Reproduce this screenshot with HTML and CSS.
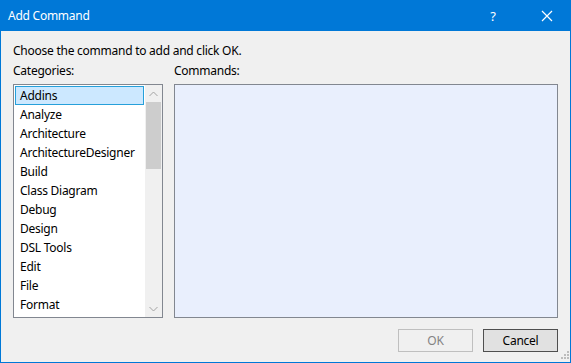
FILE: index.html
```html
<!DOCTYPE html>
<html>
<head>
<meta charset="utf-8">
<link rel="stylesheet" href="styles.css">
</head>
<body>
<div class="window">
  <div class="titlebar">
    <span class="title">Add Command</span>
    <span class="help">?</span>
    <span class="close">
      <svg width="12" height="12" viewBox="0 0 12 12"><path d="M1 1L11 11M11 1L1 11" stroke="#fff" stroke-width="1.2" fill="none"/></svg>
    </span>
  </div>
  <div class="content">
    <div class="instr">Choose the command to add and click OK.</div>
    <div class="panes">
      <div class="col left">
        <div class="label">Categories:</div>
        <div class="listbox">
          <div class="items">
            <div class="item selected">Addins</div>
            <div class="item">Analyze</div>
            <div class="item">Architecture</div>
            <div class="item">ArchitectureDesigner</div>
            <div class="item">Build</div>
            <div class="item">Class Diagram</div>
            <div class="item">Debug</div>
            <div class="item">Design</div>
            <div class="item">DSL Tools</div>
            <div class="item">Edit</div>
            <div class="item">File</div>
            <div class="item">Format</div>
          </div>
          <div class="scrollbar">
            <div class="arrow">
              <svg width="9" height="6" viewBox="0 0 9 6"><path d="M0.5 5L4.5 1L8.5 5" stroke="#a3a3a3" stroke-width="1" fill="none"/></svg>
            </div>
            <div class="thumb"></div>
            <div class="track"></div>
            <div class="arrow">
              <svg width="9" height="6" viewBox="0 0 9 6"><path d="M0.5 1L4.5 5L8.5 1" stroke="#a3a3a3" stroke-width="1" fill="none"/></svg>
            </div>
          </div>
        </div>
      </div>
      <div class="col right">
        <div class="label">Commands:</div>
        <div class="cmdbox"></div>
      </div>
    </div>
    <div class="buttons">
      <div class="btn disabled">OK</div>
      <div class="btn default">Cancel</div>
    </div>
  </div>
  <svg class="grip" width="12" height="12" viewBox="0 0 12 12">
    <g fill="#bcbcbc">
      <rect x="9" y="1" width="2" height="2"/>
      <rect x="6" y="4" width="2" height="2"/><rect x="9" y="4" width="2" height="2"/>
      <rect x="3" y="7" width="2" height="2"/><rect x="6" y="7" width="2" height="2"/><rect x="9" y="7" width="2" height="2"/>
    </g>
  </svg>
</div>
</body>
</html>
```

FILE: styles.css
```css
html, body {
  margin: 0;
  padding: 0;
  background: #f0f0f0;
}
body {
  font-family: "Noto Sans", "Open Sans", sans-serif;
  font-size: 12px;
  letter-spacing: -0.25px;
  color: #000;
}
.window {
  position: relative;
  width: 571px;
  height: 363px;
  box-sizing: border-box;
  border: 1px solid #0078d7;
  background: #f0f0f0;
  display: flex;
  flex-direction: column;
  overflow: hidden;
}
.titlebar {
  height: 30px;
  background: #0078d7;
  color: #fff;
  display: flex;
  align-items: center;
  flex-shrink: 0;
}
.title {
  margin-left: 7px;
  flex: 1;
  font-size: 12px;
  line-height: 16px;
}
.help {
  width: 14px;
  text-align: center;
  font-size: 13px;
  margin-right: 40px;
}
.close {
  width: 14px;
  display: flex;
  justify-content: center;
  margin-right: 16px;
}
.content {
  padding: 12px 12px 0 12px;
  display: flex;
  flex-direction: column;
}
.instr {
  line-height: 16px;
}
.panes {
  display: flex;
  gap: 11px;
  margin-top: 4px;
}
.col {
  display: flex;
  flex-direction: column;
}
.left { width: 150px; }
.right { flex: 1; }
.label {
  line-height: 16px;
  margin-bottom: 5px;
}
.listbox {
  height: 234px;
  box-sizing: border-box;
  border: 1px solid #828790;
  background: #fff;
  display: flex;
}
.items {
  flex: 1;
  padding: 1px;
  overflow: hidden;
}
.item {
  height: 19px;
  line-height: 18px;
  padding-top: 1px;
  padding-left: 5px;
  box-sizing: border-box;
  white-space: nowrap;
}
.item.selected {
  background: #cce8ff;
  border: 1px solid #26a0da;
  padding-top: 0;
  padding-left: 4px;
  line-height: 18px;
}
.scrollbar {
  width: 17px;
  background: #f0f0f0;
  display: flex;
  flex-direction: column;
}
.arrow {
  height: 17px;
  display: flex;
  align-items: center;
  justify-content: center;
  flex-shrink: 0;
}
.thumb {
  height: 67px;
  margin: 0 1px;
  background: #cdcdcd;
}
.track { flex: 1; }
.cmdbox {
  height: 234px;
  box-sizing: border-box;
  border: 1px solid #828790;
  background: #e9effd;
}
.buttons {
  display: flex;
  justify-content: flex-end;
  gap: 10px;
  margin-top: 11px;
}
.btn {
  width: 75px;
  height: 23px;
  box-sizing: border-box;
  display: flex;
  align-items: center;
  justify-content: center;
  line-height: 16px;
}
.btn.disabled {
  border: 1px solid #bfbfbf;
  background: #f0f0f0;
  color: #838383;
}
.btn.default {
  border: 1px solid #4f4f4f;
  background: #e1e1e1;
  color: #000;
}
.grip {
  position: absolute;
  right: 0;
  bottom: 0;
}
```
